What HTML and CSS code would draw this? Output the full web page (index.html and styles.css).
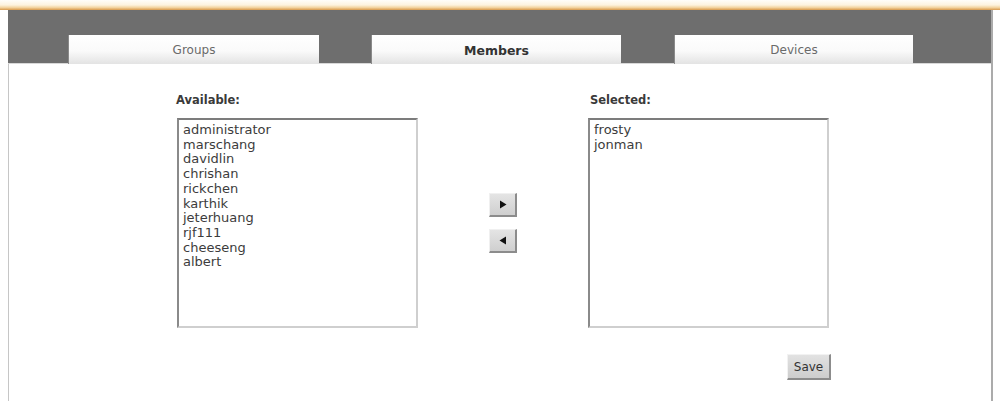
FILE: index.html
```html
<!DOCTYPE html>
<html>
<head>
<meta charset="utf-8">
<title>Members</title>
<link rel="stylesheet" href="styles.css">
</head>
<body>
<div class="top-strip"></div>
<div class="frame">
  <div class="header">
    <div class="tab">Groups</div>
    <div class="tab tab-active">Members</div>
    <div class="tab tab-last">Devices</div>
  </div>
  <div class="content">
    <div class="picker">
      <div class="col">
        <div class="label">Available:</div>
        <div class="listbox">
          <div class="item">administrator</div>
          <div class="item">marschang</div>
          <div class="item">davidlin</div>
          <div class="item">chrishan</div>
          <div class="item">rickchen</div>
          <div class="item">karthik</div>
          <div class="item">jeterhuang</div>
          <div class="item">rjf111</div>
          <div class="item">cheeseng</div>
          <div class="item">albert</div>
        </div>
      </div>
      <div class="mid">
        <button class="arrow" type="button" aria-label="Add">
          <svg width="8" height="9" viewBox="0 0 8 9"><path d="M1 0.5 L7.5 4.5 L1 8.5 Z" fill="#111"/></svg>
        </button>
        <button class="arrow" type="button" aria-label="Remove">
          <svg width="8" height="9" viewBox="0 0 8 9"><path d="M7 0.5 L0.5 4.5 L7 8.5 Z" fill="#111"/></svg>
        </button>
      </div>
      <div class="col">
        <div class="label label-right">Selected:</div>
        <div class="listbox">
          <div class="item">frosty</div>
          <div class="item">jonman</div>
        </div>
      </div>
      <div class="save-row">
        <button class="save" type="button">Save</button>
      </div>
    </div>
  </div>
</div>
</body>
</html>
```
FILE: styles.css
```css
html, body {
  margin: 0;
  padding: 0;
  background: #ffffff;
  font-family: "DejaVu Sans", Verdana, sans-serif;
  overflow: hidden;
}

.top-strip {
  height: 10px;
  background: linear-gradient(to bottom, #fffefa 0%, #fdf3df 50%, #f3d4a0 75%, #d8994c 100%);
}

.frame {
  margin-left: 8px;
  width: 985px;
  height: 391px;
  box-sizing: border-box;
  border-left: 1px solid #c6c6c6;
  border-right: 2px solid #ababab;
}

.header {
  height: 54px;
  box-sizing: border-box;
  padding-top: 25px;
  padding-left: 60px;
  background: #6e6e6e;
  border-bottom: 1px solid #d8d8d8;
  display: flex;
  gap: 52px;
  margin-left: -1px;
}

.tab {
  width: 251px;
  height: 29px;
  box-sizing: border-box;
  background: linear-gradient(to bottom, #ffffff 0%, #fafafa 55%, #e3e3e3 100%);
  border-left: 1px solid #8a8a8a;
  color: #6a6a6a;
  font-size: 12px;
  display: flex;
  align-items: center;
  justify-content: center;
  padding-top: 1px;
}

.tab-active {
  color: #333333;
  font-weight: bold;
  font-size: 12.5px;
  width: 250px;
}

.tab-last {
  width: 239px;
  margin-left: 1px;
}

.content {
  padding-top: 29px;
  padding-left: 168px;
}

.picker {
  display: grid;
  grid-template-columns: 241px 170px 241px;
}

.col {
  display: flex;
  flex-direction: column;
}

.label {
  font-size: 11.5px;
  font-weight: bold;
  color: #3a3a3a;
  line-height: 14px;
  height: 14px;
  margin-left: -1px;
  margin-bottom: 11px;
}

.label-right {
  margin-left: 2px;
}

.listbox {
  width: 241px;
  height: 210px;
  box-sizing: border-box;
  border-top: 2px solid #7c7c7c;
  border-left: 2px solid #8a8a8a;
  border-right: 2px solid #cfcfcf;
  border-bottom: 2px solid #cfcfcf;
  padding: 3px 4px;
  background: #ffffff;
}

.item {
  font-size: 13px;
  line-height: 14.7px;
  color: #3c3c3c;
  white-space: nowrap;
}

.mid {
  display: flex;
  flex-direction: column;
  align-items: center;
  padding-top: 100px;
  gap: 12px;
}

.arrow {
  width: 28px;
  height: 24px;
  padding: 0;
  margin: 0;
  box-sizing: border-box;
  background: linear-gradient(to bottom, #e4e4e4, #cfcfcf);
  border-top: 1px solid #f0f0f0;
  border-left: 1px solid #f0f0f0;
  border-right: 2px solid #8c8c8c;
  border-bottom: 2px solid #8c8c8c;
  display: flex;
  align-items: center;
  justify-content: center;
  cursor: pointer;
}

.arrow svg {
  display: block;
}

.save-row {
  grid-column: 3;
  display: flex;
  justify-content: flex-end;
  margin-right: -2px;
  padding-top: 26px;
}

.save {
  width: 44px;
  height: 26px;
  padding: 0;
  margin: 0;
  box-sizing: border-box;
  background: linear-gradient(to bottom, #e2e2e2, #cdcdcd);
  border-top: 1px solid #f2f2f2;
  border-left: 1px solid #f2f2f2;
  border-right: 2px solid #8c8c8c;
  border-bottom: 2px solid #8c8c8c;
  font-family: "DejaVu Sans", Verdana, sans-serif;
  font-size: 12px;
  color: #333333;
  cursor: pointer;
}
```
